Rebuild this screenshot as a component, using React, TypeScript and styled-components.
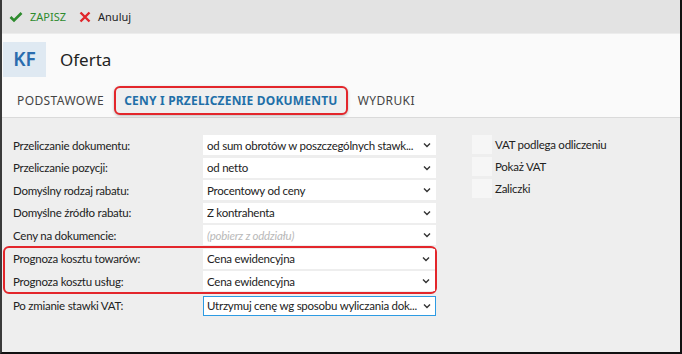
import styled, { createGlobalStyle } from "styled-components";

const GlobalStyle = createGlobalStyle`
  html, body {
    margin: 0;
    padding: 0;
    background: #ffffff;
  }
  * {
    box-sizing: border-box;
  }
`;

const Frame = styled.div`
  width: 682px;
  height: 354px;
  display: flex;
  flex-direction: column;
  overflow: hidden;
  border-left: 2px solid #3a3a3a;
  border-right: 2px solid #111111;
  border-bottom: 2px solid #111111;
  font-family: "Noto Sans", "Open Sans", sans-serif;
  color: #222222;
  background: #eeeeee;
`;

const Toolbar = styled.div`
  height: 34px;
  flex: none;
  display: flex;
  align-items: center;
  gap: 13px;
  padding: 0 0 0 7px;
  background: #e3e3e3;
  border-bottom: 1px solid #ececec;
`;

const ToolButton = styled.div<{ $tone: string }>`
  display: flex;
  align-items: center;
  gap: 7px;
  font-size: 11px;
  color: ${(p) => p.$tone};
`;

const Header = styled.div`
  height: 50px;
  flex: none;
  display: flex;
  align-items: center;
  gap: 14px;
  padding: 0 0 0 1px;
  background: #fafafa;
`;

const Badge = styled.div`
  width: 43px;
  height: 35px;
  display: flex;
  align-items: center;
  justify-content: center;
  background: #dfe9f2;
  color: #2a6cae;
  font-size: 19px;
  font-weight: 600;
`;

const Title = styled.div`
  font-size: 17px;
  color: #222222;
`;

const Tabs = styled.div`
  height: 34px;
  flex: none;
  display: flex;
  align-items: center;
  padding: 0 0 0 5px;
  background: #fafafa;
  border-bottom: 1px solid #dadada;
`;

const Tab = styled.div<{ $active?: boolean }>`
  height: 29px;
  display: flex;
  align-items: center;
  padding: 0 8px;
  font-size: 12px;
  letter-spacing: ${(p) => (p.$active ? "0.2px" : "0.4px")};
  color: ${(p) => (p.$active ? "#1f6fa8" : "#444444")};
  font-weight: ${(p) => (p.$active ? 700 : 400)};
  background: ${(p) => (p.$active ? "#efefef" : "transparent")};
  border: 2px solid ${(p) => (p.$active ? "#e3262b" : "transparent")};
  border-radius: 6px;
  box-shadow: ${(p) => (p.$active ? "0 1px 3px rgba(0,0,0,0.25)" : "none")};
`;

const Content = styled.div`
  flex: 1;
  display: flex;
  gap: 35px;
  padding: 17px 0 0 11px;
  background: #eeeeee;
  font-family: "Lato", "Noto Sans", sans-serif;
  font-size: 11.5px;
  letter-spacing: -0.25px;
`;

const Form = styled.div`
  width: 424px;
  display: flex;
  flex-direction: column;
  gap: 2.5px;
`;

const Highlight = styled.div`
  margin: -2px 0 -1px -10px;
  padding: 1px 0 1px 8px;
  display: flex;
  flex-direction: column;
  gap: 2.5px;
  border: 2px solid #e3262b;
  border-radius: 6px;
`;

const Row = styled.div`
  display: flex;
  align-items: center;
  height: 20px;
`;

const Label = styled.div`
  width: 190px;
  flex: none;
  color: #222222;
`;

const Select = styled.div<{ $focused?: boolean; $placeholder?: boolean }>`
  width: 233px;
  height: 20px;
  display: flex;
  align-items: center;
  gap: 4px;
  padding: 0 4px 0 3px;
  background: #ffffff;
  border: 1px solid ${(p) => (p.$focused ? "#2d9be3" : "#ffffff")};
  white-space: nowrap;
  color: ${(p) => (p.$placeholder ? "#b9b9b9" : "#222222")};
  font-style: ${(p) => (p.$placeholder ? "italic" : "normal")};
`;

const SelectText = styled.span`
  flex: 1;
  min-width: 0;
  overflow: hidden;
`;

const Side = styled.div`
  display: flex;
  flex-direction: column;
  gap: 3px;
`;

const CheckRow = styled.div`
  display: flex;
  align-items: center;
  gap: 3px;
  height: 19px;
  color: #222222;
`;

const CheckBox = styled.div`
  width: 20px;
  height: 19px;
  background: #f6f6f6;
`;

const Chevron = () => (
  <svg width="8" height="6" viewBox="0 0 8 6">
    <path d="M1 1.5 L4 4.5 L7 1.5" fill="none" stroke="#333" strokeWidth="1.4" />
  </svg>
);

const Check = () => (
  <svg width="14" height="12" viewBox="0 0 14 12">
    <path d="M1.5 6 L5 9.5 L12.5 2" fill="none" stroke="#2e8b2e" strokeWidth="2.6" />
  </svg>
);

const Cross = () => (
  <svg width="12" height="12" viewBox="0 0 12 12">
    <path d="M1.5 1.5 L10.5 10.5 M10.5 1.5 L1.5 10.5" fill="none" stroke="#e0262b" strokeWidth="2.4" />
  </svg>
);

type Field = { label: string; value: string; placeholder?: boolean; focused?: boolean };

const FieldRow = ({ label, value, placeholder, focused }: Field) => (
  <Row>
    <Label>{label}</Label>
    <Select $focused={focused} $placeholder={placeholder}>
      <SelectText>{value}</SelectText>
      <Chevron />
    </Select>
  </Row>
);

const topFields: Field[] = [
  { label: "Przeliczanie dokumentu:", value: "od sum obrotów w poszczególnych stawk..." },
  { label: "Przeliczanie pozycji:", value: "od netto" },
  { label: "Domyślny rodzaj rabatu:", value: "Procentowy od ceny" },
  { label: "Domyślne źródło rabatu:", value: "Z kontrahenta" },
  { label: "Ceny na dokumencie:", value: "(pobierz z oddziału)", placeholder: true },
];

const costFields: Field[] = [
  { label: "Prognoza kosztu towarów:", value: "Cena ewidencyjna" },
  { label: "Prognoza kosztu usług:", value: "Cena ewidencyjna" },
];

const checks = ["VAT podlega odliczeniu", "Pokaż VAT", "Zaliczki"];

export default function App() {
  return (
    <>
      <GlobalStyle />
      <Frame>
        <Toolbar>
          <ToolButton $tone="#2e8b2e">
            <Check />
            ZAPISZ
          </ToolButton>
          <ToolButton $tone="#222222">
            <Cross />
            Anuluj
          </ToolButton>
        </Toolbar>
        <Header>
          <Badge>KF</Badge>
          <Title>Oferta</Title>
        </Header>
        <Tabs>
          <Tab>PODSTAWOWE</Tab>
          <Tab $active>CENY I PRZELICZENIE DOKUMENTU</Tab>
          <Tab>WYDRUKI</Tab>
        </Tabs>
        <Content>
          <Form>
            {topFields.map((f) => (
              <FieldRow key={f.label} {...f} />
            ))}
            <Highlight>
              {costFields.map((f) => (
                <FieldRow key={f.label} {...f} />
              ))}
            </Highlight>
            <FieldRow
              label="Po zmianie stawki VAT:"
              value="Utrzymuj cenę wg sposobu wyliczania dok..."
              focused
            />
          </Form>
          <Side>
            {checks.map((c) => (
              <CheckRow key={c}>
                <CheckBox />
                {c}
              </CheckRow>
            ))}
          </Side>
        </Content>
      </Frame>
    </>
  );
}
